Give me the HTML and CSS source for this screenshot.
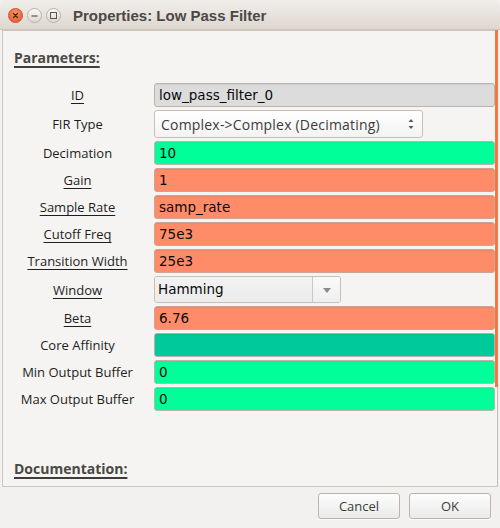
FILE: index.html
```html
<!DOCTYPE html>
<html>
<head>
<meta charset="utf-8">
<title>Properties: Low Pass Filter</title>
<link rel="stylesheet" href="styles.css">
</head>
<body>
<div class="window">
  <div class="titlebar">
    <div class="wbtns">
      <span class="wbtn close">
        <svg width="15" height="15" viewBox="0 0 15 15"><path d="M5.5 5.5 L9.5 9.5 M9.5 5.5 L5.5 9.5" stroke="#4a2514" stroke-width="1.3" stroke-linecap="round" fill="none"/></svg>
      </span>
      <span class="wbtn">
        <svg width="15" height="15" viewBox="0 0 15 15"><path d="M4.5 8 H10.5" stroke="#5a5651" stroke-width="1.2" fill="none"/></svg>
      </span>
      <span class="wbtn">
        <svg width="15" height="15" viewBox="0 0 15 15"><rect x="4.5" y="4.5" width="6" height="6" stroke="#5a5651" stroke-width="1" fill="none"/></svg>
      </span>
    </div>
    <div class="title">Properties: Low Pass Filter</div>
  </div>

  <div class="panel">
    <div class="scroll-thumb"></div>
    <div class="section-title">Parameters:</div>
    <div class="params">
      <div class="lbl"><span class="u">ID</span></div>
      <div class="entry id">low_pass_filter_0</div>

      <div class="lbl">FIR Type</div>
      <div class="combo fir">
        <span class="combo-text">Complex-&gt;Complex (Decimating)</span>
        <svg class="updown" width="8" height="14" viewBox="0 0 8 14"><path d="M1.5 5 L4 2 L6.5 5 Z" fill="#5b5b5b"/><path d="M1.5 9 L4 12 L6.5 9 Z" fill="#5b5b5b"/></svg>
      </div>

      <div class="lbl">Decimation</div>
      <div class="entry int">10</div>

      <div class="lbl"><span class="u">Gain</span></div>
      <div class="entry float">1</div>

      <div class="lbl"><span class="u">Sample Rate</span></div>
      <div class="entry float">samp_rate</div>

      <div class="lbl"><span class="u">Cutoff Freq</span></div>
      <div class="entry float">75e3</div>

      <div class="lbl"><span class="u">Transition Width</span></div>
      <div class="entry float">25e3</div>

      <div class="lbl"><span class="u">Window</span></div>
      <div class="wincombo">
        <div class="wincombo-text">Hamming</div>
        <div class="wincombo-btn">
          <svg width="10" height="8" viewBox="0 0 10 8"><path d="M1 2 L9 2 L5 7 Z" fill="#8a8a8a"/></svg>
        </div>
      </div>

      <div class="lbl"><span class="u">Beta</span></div>
      <div class="entry float">6.76</div>

      <div class="lbl">Core Affinity</div>
      <div class="entry vec"></div>

      <div class="lbl">Min Output Buffer</div>
      <div class="entry int">0</div>

      <div class="lbl">Max Output Buffer</div>
      <div class="entry int">0</div>
    </div>
    <div class="section-title doc">Documentation:</div>
  </div>

  <div class="actions">
    <button class="btn">Cancel</button>
    <button class="btn">OK</button>
  </div>
</div>
</body>
</html>
```
FILE: styles.css
```css
* { box-sizing: border-box; }

html, body {
  margin: 0;
  padding: 0;
  background: #f2f1f0;
}

.window {
  width: 500px;
  height: 528px;
  background: #f2f1f0;
  font-family: "Open Sans", "DejaVu Sans", sans-serif;
  color: #262626;
  overflow: hidden;
}

.titlebar {
  height: 30px;
  display: flex;
  align-items: center;
  background: linear-gradient(#f1eeea, #ded7d0);
  border-bottom: 1px solid #cdc5bc;
  border-radius: 6px 6px 0 0;
}

.wbtns {
  display: flex;
  gap: 4px;
  margin-left: 8px;
  margin-top: 2px;
}

.wbtn {
  width: 15px;
  height: 15px;
  border-radius: 50%;
  border: 1px solid #b9b1a9;
  background: linear-gradient(#faf9f7, #dcd7d1);
  display: flex;
  align-items: center;
  justify-content: center;
}
.wbtn svg { display: block; margin: -1px; }

.wbtn.close {
  border-color: #c9562b;
  background: radial-gradient(circle at 50% 35%, #f99a72, #ee6a3a 60%, #d9542a);
}

.title {
  margin-left: 12px;
  margin-top: 1px;
  font-family: "Liberation Sans", "DejaVu Sans", sans-serif;
  font-weight: bold;
  font-size: 15px;
  color: #4b4945;
}

.panel {
  position: relative;
  margin: 0 2px;
  height: 457px;
  border: 1px solid #cfc7be;
  border-right-color: #c4bcb4;
  background: #f5f4f2;
  padding: 0 2px 0 0;
}

.scroll-thumb {
  position: absolute;
  top: -1px;
  right: -1px;
  width: 3px;
  height: 357px;
  background: #ef7a46;
}

.section-title {
  font-weight: bold;
  font-size: 14px;
  line-height: 17px;
  color: #4a4845;
  margin: 18px 0 0 11px;
  text-decoration: underline;
  text-decoration-thickness: 2px;
  text-underline-offset: 3px;
  text-decoration-color: #3f3d3a;
  width: max-content;
}

.section-title.doc {
  margin-top: 49px;
}

.params {
  display: grid;
  grid-template-columns: 149px 1fr;
  column-gap: 2px;
  row-gap: 3px;
  margin-top: 17px;
}

.lbl {
  align-self: center;
  text-align: center;
  font-size: 13px;
  line-height: 16px;
  color: #1e1e1e;
}

.u {
  text-decoration: underline;
  text-decoration-thickness: 1px;
  text-underline-offset: 3px;
}

.entry {
  height: 24px;
  border: 1px solid #c3b9b0;
  border-radius: 3px;
  padding: 0 4px;
  font-family: "DejaVu Sans", sans-serif;
  font-size: 13.5px;
  line-height: 22px;
  color: #0a0a0a;
  box-shadow: inset 0 1px 1px rgba(0,0,0,0.06);
}

.entry.id { background: #dcdcdc; border-color: #bdb5ad; }
.entry.int { background: #00ff99; border-color: #c0b3a8; }
.entry.float { background: #ff8c69; border-color: #c8a797; }
.entry.vec { background: #00c99b; border-color: #b9b1a8; }

.combo {
  height: 28px;
  width: 269px;
  border: 1px solid #c8c0b8;
  border-radius: 3px;
  background: linear-gradient(#ffffff, #f4f3f2);
  display: flex;
  align-items: center;
  justify-content: space-between;
  padding: 0 7px 0 6px;
}

.combo-text {
  font-size: 14px;
  letter-spacing: 0.2px;
  color: #3c3c3c;
}

.updown { display: block; }

.wincombo {
  height: 27px;
  width: 187px;
  display: flex;
  border: 1px solid #c8c0b8;
  border-radius: 3px;
  overflow: hidden;
}

.wincombo-text {
  flex: 1;
  background: linear-gradient(#f2f2f2, #ececec);
  font-family: "DejaVu Sans", sans-serif;
  font-size: 13.5px;
  line-height: 25px;
  padding-left: 3px;
  color: #0a0a0a;
  border-right: 1px solid #cfc8c0;
}

.wincombo-btn {
  width: 27px;
  background: linear-gradient(#f9f9f9, #efefef);
  display: flex;
  align-items: center;
  justify-content: center;
}

.actions {
  display: flex;
  justify-content: flex-end;
  gap: 9px;
  padding: 6px 9px 0 0;
}

.btn {
  width: 82px;
  height: 26px;
  border: 1px solid #bcb4ac;
  border-radius: 3px;
  background: linear-gradient(#fdfdfd, #ebeae9);
  font-family: "Open Sans", "DejaVu Sans", sans-serif;
  font-size: 13px;
  color: #3c3c3c;
  padding: 0;
  box-shadow: 0 1px 0 rgba(255,255,255,0.6);
}
```
